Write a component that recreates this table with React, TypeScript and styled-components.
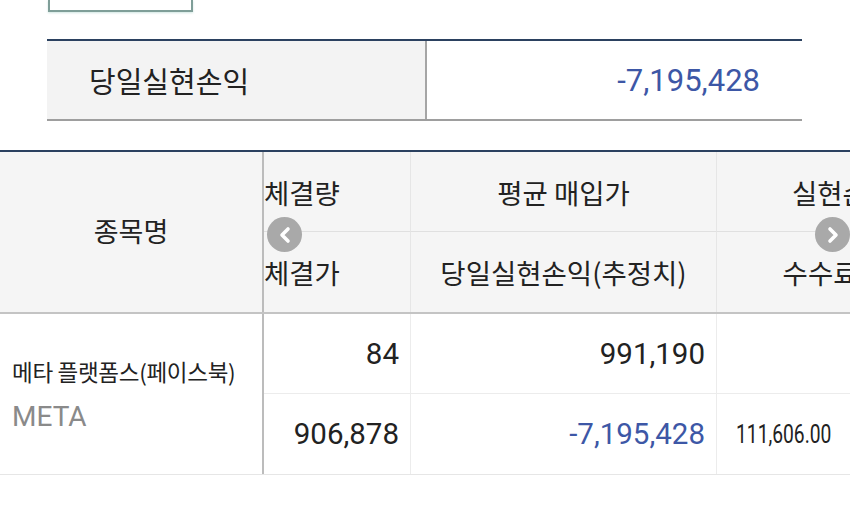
import React from "react";
import styled, { createGlobalStyle } from "styled-components";

const Global = createGlobalStyle`
  html, body { margin: 0; padding: 0; background: #ffffff; }
  body { font-family: Roboto, "Noto Sans CJK KR", sans-serif; color: #222; }
  #root { width: 850px; height: 526px; overflow: hidden; }
`;

const Page = styled.div`
  width: 850px;
  height: 526px;
  display: flex;
  flex-direction: column;
  background: #fff;
  overflow: hidden;
`;

const TopButton = styled.div`
  box-sizing: border-box;
  margin-left: 48px;
  width: 145px;
  height: 12px;
  border: 2px solid #7f9e98;
  border-top: none;
  box-shadow: 0 1px 2px rgba(120, 180, 170, 0.35);
  background: #fff;
`;

const Summary = styled.div`
  box-sizing: border-box;
  margin: 27px 0 0 47px;
  width: 755px;
  display: grid;
  grid-template-columns: 378px 1fr;
  height: 82px;
  border-top: 2px solid #2b4160;
  border-bottom: 2px solid #9e9e9e;
`;

const SummaryLabel = styled.div`
  display: flex;
  align-items: center;
  padding-left: 42px;
  background: #f3f3f3;
  font-family: "Noto Sans CJK KR", sans-serif;
  font-size: 29px;
  color: #222;
`;

const SummaryValue = styled.div`
  display: flex;
  align-items: center;
  justify-content: flex-end;
  padding-right: 42px;
  border-left: 2px solid #a5a5a5;
  font-family: Roboto, sans-serif;
  font-size: 31px;
  color: #3d57a6;
`;

const TableWrap = styled.div`
  position: relative;
  margin-top: 29px;
  width: 850px;
  overflow: hidden;
  border-top: 2px solid #2b4160;
`;

const Grid = styled.div`
  display: grid;
  grid-template-columns: 264px 146px 306px 252px;
  width: 968px;
`;

const HeadGrid = styled(Grid)`
  grid-template-rows: 80px 80px;
  background: #f5f5f5;
  border-bottom: 2px solid #c4c4c4;
`;

const BodyGrid = styled(Grid)`
  grid-template-rows: 80px 80px;
  background: #fff;
  border-bottom: 1px solid #e6e6e6;
`;

const NameHead = styled.div`
  grid-row: 1 / span 2;
  display: flex;
  align-items: center;
  justify-content: center;
  border-right: 2px solid #bcbcbc;
  font-family: "Noto Sans CJK KR", sans-serif;
  font-size: 27px;
  color: #222;
  padding-bottom: 4px;
  box-sizing: border-box;
`;

const HeadCell = styled.div<{ $align?: string; $top?: boolean; $edge?: boolean }>`
  display: flex;
  align-items: center;
  justify-content: ${(p) => p.$align || "center"};
  box-sizing: border-box;
  border-bottom: ${(p) => (p.$top ? "1px solid #e0e0e0" : "none")};
  border-left: ${(p) => (p.$edge ? "1px solid #e6e6e6" : "none")};
  font-family: "Noto Sans CJK KR", sans-serif;
  font-size: 27.5px;
  color: #222;
  white-space: nowrap;
  overflow: hidden;
`;

const NameCell = styled.div`
  grid-row: 1 / span 2;
  display: flex;
  flex-direction: column;
  justify-content: center;
  gap: 14px;
  padding-left: 12px;
  border-right: 2px solid #bcbcbc;
  box-sizing: border-box;
`;

const StockName = styled.div`
  font-family: "Noto Sans CJK KR", sans-serif;
  font-size: 22.5px;
  color: #222;
  letter-spacing: -0.3px;
  line-height: 32px;
`;

const Ticker = styled.div`
  font-family: Roboto, sans-serif;
  font-size: 28px;
  color: #8a8a8a;
  line-height: 32px;
`;

const NumCell = styled.div<{ $top?: boolean; $edge?: boolean; $blue?: boolean }>`
  display: flex;
  align-items: center;
  justify-content: flex-end;
  padding-right: 11px;
  box-sizing: border-box;
  border-bottom: ${(p) => (p.$top ? "1px solid #ececec" : "none")};
  border-left: ${(p) => (p.$edge ? "1px solid #ececec" : "none")};
  font-family: Roboto, sans-serif;
  font-size: 29.5px;
  color: ${(p) => (p.$blue ? "#3d57a6" : "#222")};
  white-space: nowrap;
`;

const FeeCell = styled.div<{ $top?: boolean }>`
  display: flex;
  align-items: center;
  padding-left: 19px;
  box-sizing: border-box;
  border-left: 1px solid #ececec;
  border-bottom: ${(p) => (p.$top ? "1px solid #ececec" : "none")};
  white-space: nowrap;
`;

const Condensed = styled.span`
  display: inline-block;
  font-family: Roboto, sans-serif;
  font-size: 26px;
  color: #222;
  transform: scaleX(0.74);
  transform-origin: left center;
`;

const Arrow = styled.div<{ $left: number }>`
  position: absolute;
  top: 65px;
  left: ${(p) => p.$left}px;
  width: 35px;
  height: 35px;
  border-radius: 50%;
  background: #a9a9a9;
  display: flex;
  align-items: center;
  justify-content: center;
`;

const Chevron = ({ dir }: { dir: "left" | "right" }) => (
  <svg width="16" height="18" viewBox="0 0 16 18">
    <polyline
      points={dir === "left" ? "11,3 5,9 11,15" : "5,3 11,9 5,15"}
      fill="none"
      stroke="#fff"
      strokeWidth="3.6"
      strokeLinecap="round"
      strokeLinejoin="round"
    />
  </svg>
);

export default function App() {
  return (
    <Page>
      <Global />
      <TopButton />
      <Summary>
        <SummaryLabel>당일실현손익</SummaryLabel>
        <SummaryValue>-7,195,428</SummaryValue>
      </Summary>
      <TableWrap>
        <HeadGrid>
          <NameHead>종목명</NameHead>
          <HeadCell $align="flex-start" $top>체결량</HeadCell>
          <HeadCell $top $edge>평균 매입가</HeadCell>
          <HeadCell $top $edge>실현손익</HeadCell>
          <HeadCell $align="flex-start">체결가</HeadCell>
          <HeadCell $edge>당일실현손익(추정치)</HeadCell>
          <HeadCell $edge>수수료(원)</HeadCell>
        </HeadGrid>
        <BodyGrid>
          <NameCell>
            <StockName>메타 플랫폼스(페이스북)</StockName>
            <Ticker>META</Ticker>
          </NameCell>
          <NumCell $top>84</NumCell>
          <NumCell $top $edge>991,190</NumCell>
          <FeeCell $top />
          <NumCell>906,878</NumCell>
          <NumCell $edge $blue>-7,195,428</NumCell>
          <FeeCell>
            <Condensed>111,606.00</Condensed>
          </FeeCell>
        </BodyGrid>
        <Arrow $left={267}>
          <Chevron dir="left" />
        </Arrow>
        <Arrow $left={815}>
          <Chevron dir="right" />
        </Arrow>
      </TableWrap>
    </Page>
  );
}
